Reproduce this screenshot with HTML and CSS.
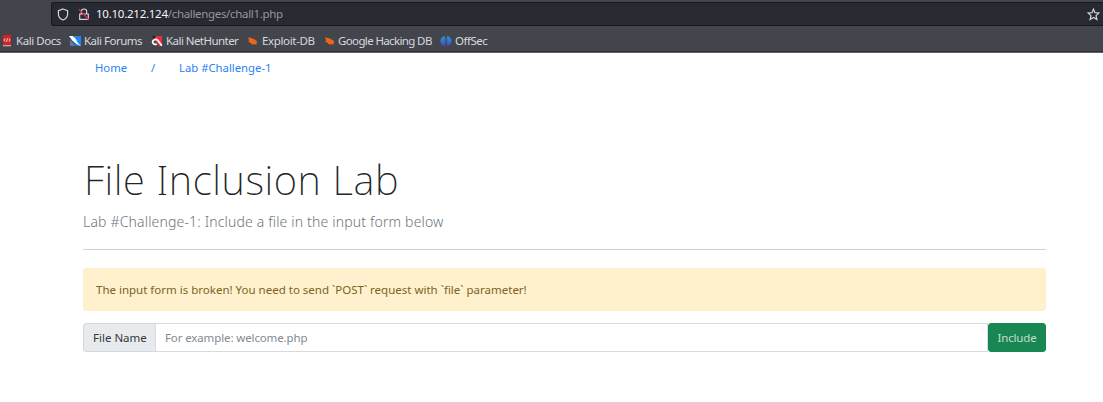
FILE: index.html
```html
<!DOCTYPE html>
<html lang="en">
<head>
<meta charset="utf-8">
<title>File Inclusion Lab</title>
<link rel="stylesheet" href="styles.css">
</head>
<body>
<header class="browser">
  <div class="address">
    <svg class="shield" width="12" height="13" viewBox="0 0 12 13"><path d="M6 1 L10.6 2.6 V6 C10.6 9 8.8 11 6 12 C3.2 11 1.4 9 1.4 6 V2.6 Z"/></svg>
    <svg class="lock" width="12" height="13" viewBox="0 0 12 13"><path d="M3.3 5.5 V3.7 a2.7 2.7 0 0 1 5.4 0 V5.5 M1.7 6 h8.6 v5.4 h-8.6 z"/><path class="strike" d="M1 1.3 L11 12"/></svg>
    <span class="url"><b>10.10.212.124</b>/challenges/chall1.php</span>
    <svg class="star" width="13" height="13" viewBox="0 0 13 13"><path d="M6.5 1.2 L8 4.7 L11.9 5 L9 7.6 L9.9 11.5 L6.5 9.4 L3.1 11.5 L4 7.6 L1.1 5 L5 4.7 Z"/></svg>
  </div>
  <nav class="bookmarks">
    <span class="mark docs"><svg width="10" height="12" viewBox="0 0 10 12"><path fill="#d51f27" d="M1 0h8v10H1z"/><path fill="#b9aaa8" d="M1 10h8v1.3H1z"/><path fill="none" stroke="#fff" stroke-width=".8" d="M3.2 3.4 1.8 5l1.4 1.6M6.8 3.4 8.2 5 6.8 6.6M5.4 3.3 4.6 6.8"/></svg><span>Kali Docs</span></span>
    <span class="mark forums"><svg width="12" height="12" viewBox="0 0 12 12"><path fill="#2484f2" d="M1 1h11v10H7.5L0 1z"/><path fill="#fff" d="M0 1h3.5l3 2.5 2.2 4.3L12 11 6.8 8.5 3.3 5.6z"/><path fill="#5aa2f0" d="M1 4.5 4.6 8.6 6.5 11H1z" opacity=".6"/></svg><span>Kali Forums</span></span>
    <span class="mark hunter"><svg width="12" height="12" viewBox="0 0 12 12"><path fill="#e8303b" d="M3 1h8v10H8L4 6z"/><path fill="#202128" d="M1 1h4L3 4z"/><path fill="none" stroke="#fff" stroke-width="1.8" d="M10.8 10.8 6.8 5.3C4.8 3.5 1.2 5 1.7 7.4 2 9.2 4 9.8 5.8 9.2"/></svg><span>Kali NetHunter</span></span>
    <span class="mark exploit"><svg width="11" height="12" viewBox="0 0 11 12"><path fill="#ed6516" d="M1 2.6 4.5 3 8.8 5.1 10.4 7.2 9.4 8l.4 1.6-2.6-.3-2 .1L3 7.5 1 6.5l1.2-1z"/></svg><span>Exploit-DB</span></span>
    <span class="mark google"><svg width="11" height="12" viewBox="0 0 11 12"><path fill="#ed6516" d="M1 2.6 4.5 3 8.8 5.1 10.4 7.2 9.4 8l.4 1.6-2.6-.3-2 .1L3 7.5 1 6.5l1.2-1z"/></svg><span>Google Hacking DB</span></span>
    <span class="mark offsec"><svg width="12" height="12" viewBox="0 0 12 12"><defs><linearGradient id="sec" x2="0" y2="1"><stop stop-color="#19a5c8"/><stop offset="1" stop-color="#5440d8"/></linearGradient></defs><path fill="url(#sec)" d="M4.8.7v10.6C-1 9.2-1 2.8 4.8.7M7.2.7v10.6C13 9.2 13 2.8 7.2.7M5.6 2.5h.8v7h-.8z"/></svg><span>OffSec</span></span>
  </nav>
</header>
<main class="page">
  <nav class="crumbs"><a class="home">Home</a><a class="slash">/</a><a class="lab">Lab #Challenge-1</a></nav>
  <h1 class="title"><span>File Inclusion Lab</span></h1>
  <p class="lead"><span>Lab #Challenge-1: Include a file in the input form below</span></p>
  <div class="alert"><span>The input form is broken! You need to send `POST` request with `file` parameter!</span></div>
  <form class="group">
    <label class="label" for="file">File Name</label>
    <input class="field" id="file" placeholder="For example: welcome.php">
    <button class="submit" type="button">Include</button>
  </form>
</main>
</body>
</html>
```
FILE: styles.css
```css
* { box-sizing: border-box; }
body { margin: 0; background: #fff; font: 12px/16px "Noto Sans", sans-serif; color: #212529; overflow: hidden; }
svg { flex: none; display: block; }
span, a { white-space: nowrap; }

.browser { height: 53px; background: #43454c; border-bottom: 1px solid #606167; box-shadow: inset 0 -1px #303137; padding-top: 2px; }
.address { height: 24px; margin-left: 51px; display: flex; align-items: center; padding: 0 3px 0 5px; background: #272933; border: 1px solid #17181d; border-right: 0; border-radius: 3px 0 0 3px; }
.address path { fill: none; stroke: #d5d5d8; stroke-width: 1.2; }
.address .strike { stroke: #e22850; stroke-width: 1.3; }
.lock { margin-left: 9px; }
.url { margin-left: 6px; color: #96979d; font-size: 11.5px; letter-spacing: -.33px; }
.url b { color: #f5f5f7; font-weight: 400; letter-spacing: -.25px; }
.star { margin-left: auto; }
.bookmarks { height: 27px; display: flex; align-items: center; padding: 3px 0 0 2px; color: #d8d8dc; font-size: 11.5px; letter-spacing: -.5px; }
.mark { display: flex; align-items: center; gap: 3px; }
.docs { width: 67px; gap: 4px; letter-spacing: -.45px; }
.forums { width: 82px; letter-spacing: -.5px; }
.hunter { width: 96px; letter-spacing: -.55px; }
.exploit { width: 77px; gap: 4px; letter-spacing: -.35px; }
.google { width: 116px; gap: 3px; letter-spacing: -.63px; }

.page { width: 963px; margin-left: 83px; }
.crumbs { display: flex; height: 31px; padding: 7px 0 0 12px; font-size: 11.3px; color: #2a81f5; }
.home { width: 56px; }
.slash { width: 28px; }
.title { margin: 74px 0 0; height: 44px; padding-left: 1px; font-size: 40px; line-height: 44px; font-weight: 200; letter-spacing: .6px; color: #212529; }
.lead { margin: 0; height: 48px; padding-top: 10px; font-size: 14px; line-height: 20px; font-weight: 300; letter-spacing: .17px; color: #6c757d; border-bottom: 1px solid #d0d1d3; }
.alert { margin-top: 18px; height: 43px; padding: 13px 12px; color: #7a641f; background: #fff1cd; border: 1px solid #ffefc6; border-radius: 3px; font-size: 11.5px; }
.group { display: flex; margin-top: 12px; height: 29px; font-size: 11.5px; }
.label { width: 73px; line-height: 27px; padding-left: 9px; background: #e8ebee; border: 1px solid #d3d8de; border-radius: 3px 0 0 3px; color: #34383c; }
.field { flex: 1; min-width: 0; margin-left: -1px; padding: 0 9px; border: 1px solid #d6dae1; font: inherit; letter-spacing: -.12px; outline: 0; }
.field::placeholder { color: #828a92; opacity: 1; }
.submit { width: 58px; padding: 0; border: 1px solid #198754; border-radius: 3px; background: #198754; color: #c2ddcf; font: inherit; letter-spacing: -.15px; }
```
